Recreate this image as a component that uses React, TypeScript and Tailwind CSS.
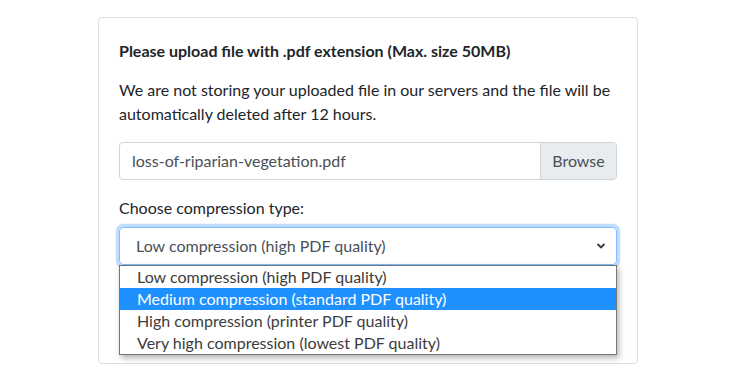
import React from "react";

export default function App() {
  const options = [
    "Low compression (high PDF quality)",
    "Medium compression (standard PDF quality)",
    "High compression (printer PDF quality)",
    "Very high compression (lowest PDF quality)",
  ];
  return (
    <div className="w-[730px] h-[381px] bg-white pt-[17px] pl-[98px] font-['Lato',sans-serif]">
      <div className="relative w-[540px] h-[347px] border border-[#dfdfdf] rounded-[4px] px-[20px] pt-[20px]">
        <div className="text-[16px] leading-[24px] font-bold text-[#212529] mt-[1px]">
          Please upload file with .pdf extension (Max. size 50MB)
        </div>
        <p className="mt-[15px] text-[16px] leading-[24px] text-[#212529]">
          We are not storing your uploaded file in our servers and the file will be automatically deleted after 12 hours.
        </p>
        <div className="mt-[16px] flex h-[38px] border border-[#ced4da] rounded-[4px] overflow-hidden">
          <div className="flex-1 flex items-center px-[12px] text-[16px] text-[#495057]">loss-of-riparian-vegetation.pdf</div>
          <div className="w-[76px] flex items-center justify-center bg-[#e9ecef] border-l border-[#ced4da] text-[16px] text-[#495057]">
            Browse
          </div>
        </div>
        <div className="mt-[16px] text-[16px] leading-[24px] text-[#212529]">Choose compression type:</div>
        <div className="relative mt-[7px]">
          <div className="flex items-center h-[38px] border border-[#80bdff] rounded-[4px] shadow-[0_0_0_3.2px_rgba(0,123,255,0.25)] pl-[16px] pr-[10px] text-[16px] text-[#495057]">
            <span className="flex-1">{options[0]}</span>
            <svg width="10" height="8" viewBox="0 0 10 8">
              <path d="M1.5 2 L5 5.5 L8.5 2" fill="none" stroke="#343a40" strokeWidth="1.8" />
            </svg>
          </div>
          <div className="absolute left-0 top-[38px] w-[498px] border border-[#767676] bg-white shadow-[2px_3px_6px_rgba(0,0,0,0.3)] z-10">
            {options.map((o, i) => (
              <div
                key={o}
                className={
                  "h-[22px] leading-[22px] pl-[17px] text-[16px] " +
                  (i === 1 ? "bg-[#1e90ff] text-white" : "text-[#3c3c3c]")
                }
              >
                {o}
              </div>
            ))}
          </div>
        </div>
      </div>
    </div>
  );
}
